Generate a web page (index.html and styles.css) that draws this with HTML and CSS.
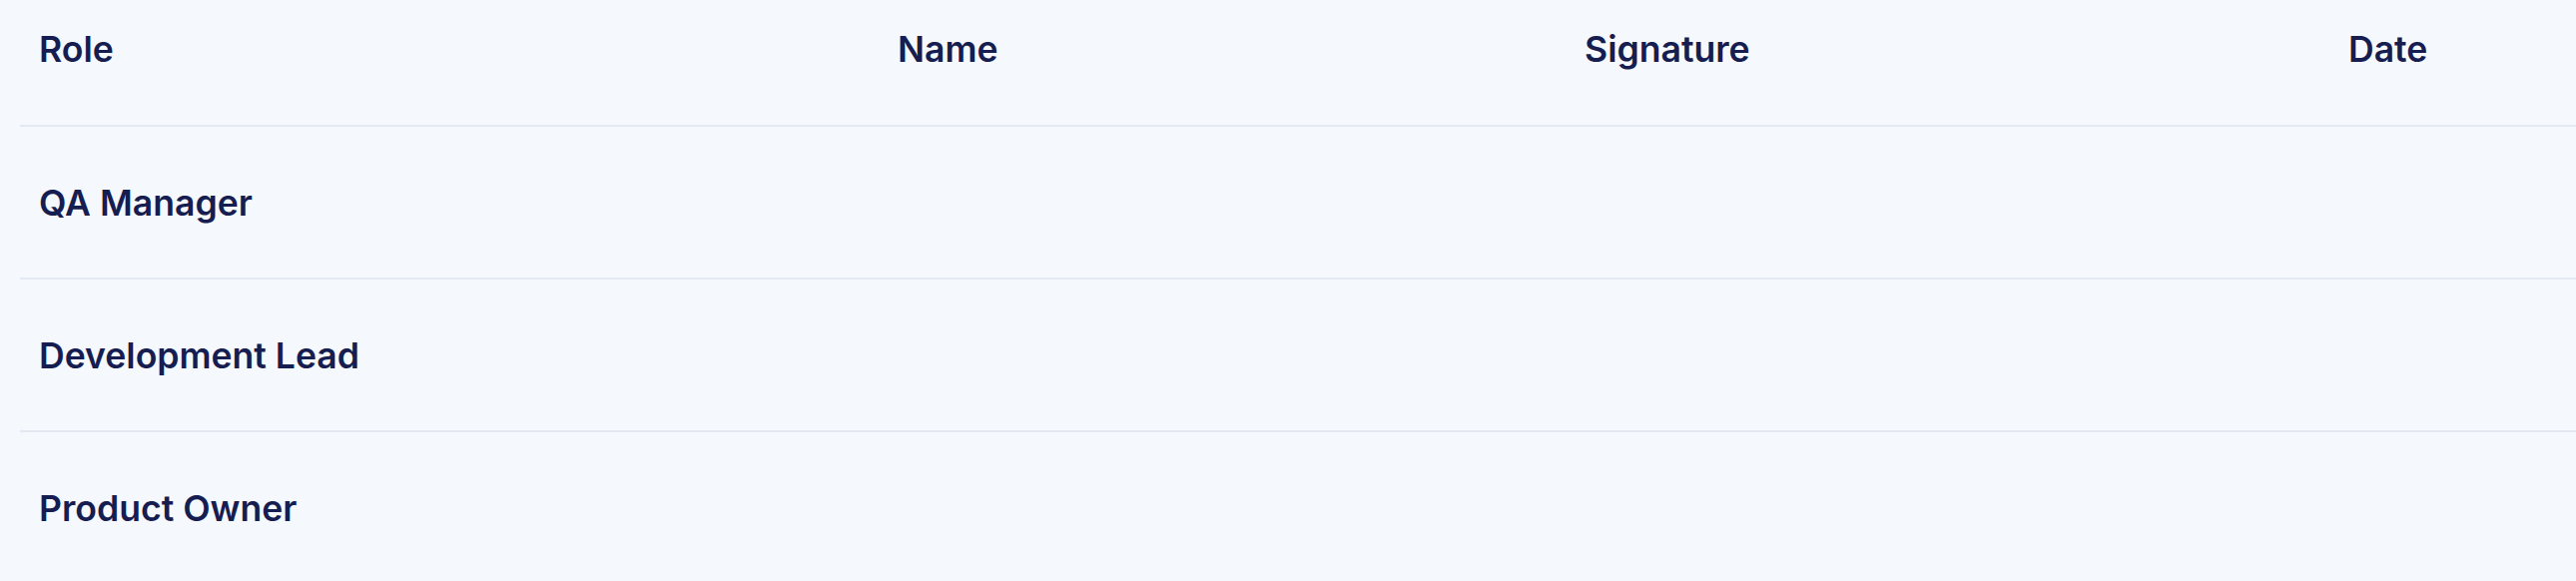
FILE: index.html
```html
<!DOCTYPE html>
<html lang="en">
<head>
<meta charset="utf-8">
<title>Sign-off</title>
<link rel="stylesheet" href="styles.css">
</head>
<body>
<table class="signoff">
  <colgroup>
    <col class="col-role">
    <col class="col-name">
    <col class="col-signature">
    <col class="col-date">
  </colgroup>
  <thead>
    <tr>
      <th>Role</th>
      <th>Name</th>
      <th>Signature</th>
      <th>Date</th>
    </tr>
  </thead>
  <tbody>
    <tr>
      <td>QA Manager</td>
      <td></td>
      <td></td>
      <td></td>
    </tr>
    <tr>
      <td>Development Lead</td>
      <td></td>
      <td></td>
      <td></td>
    </tr>
    <tr>
      <td>Product Owner</td>
      <td></td>
      <td></td>
      <td></td>
    </tr>
  </tbody>
</table>
</body>
</html>
```
FILE: styles.css
```css
html, body {
  margin: 0;
  padding: 0;
  background: #f5f8fd;
}

body {
  font-family: Inter, "Noto Sans", sans-serif;
  color: #161d50;
  overflow: hidden;
}

.signoff {
  margin-left: 20px;
  width: calc(100% - 20px);
  border-collapse: collapse;
  table-layout: fixed;
}

.col-role { width: 860px; }
.col-name { width: 688px; }
.col-signature { width: 765px; }
.col-date { width: auto; }

.signoff th,
.signoff td {
  font-size: 35.6px;
  font-weight: 600;
  line-height: 54px;
  text-align: left;
  padding: 50px 19px 47px 19px;
  border-bottom: 2px solid #e2e9f3;
  white-space: nowrap;
}

.signoff th {
  padding-top: 23px;
  padding-bottom: 48px;
}

.signoff th:first-child,
.signoff td:first-child {
  padding-left: 19px;
}
```
